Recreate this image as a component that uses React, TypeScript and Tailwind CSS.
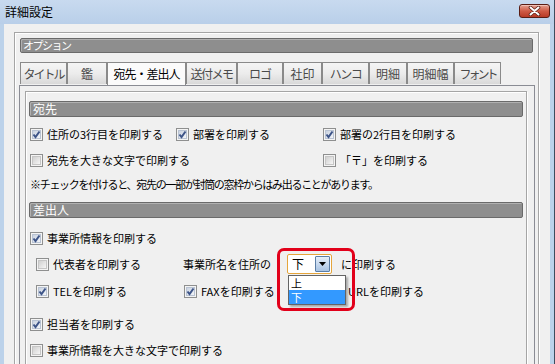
import React from 'react';

const JP = "font-['Noto_Sans_CJK_JP','Noto_Sans',sans-serif]";

const tabs = [
  { label: 'タイトル', w: 'w-[47px]', t: 'tracking-[-2px]' },
  { label: '鑑', w: 'w-[40px]', t: 'tracking-normal' },
  { label: '宛先・差出人', w: 'w-[79px]', t: 'tracking-[-1px]', active: true },
  { label: '送付メモ', w: 'w-[51px]', t: 'tracking-[-1.5px]' },
  { label: 'ロゴ', w: 'w-[46px]', t: 'tracking-[-1px]' },
  { label: '社印', w: 'w-[39px]', t: 'tracking-normal' },
  { label: 'ハンコ', w: 'w-[47px]', t: 'tracking-[-1.5px]' },
  { label: '明細', w: 'w-[38px]', t: 'tracking-normal' },
  { label: '明細幅', w: 'w-[47px]', t: 'tracking-normal' },
  { label: 'フォント', w: 'w-[47px]', t: 'tracking-[-3px]' },
];

const Check = ({ checked }: { checked?: boolean }) => (
  <span className="relative inline-block h-[13px] w-[13px] shrink-0 border border-[#8e8f8f] bg-[#f4f4f4]">
    <span
      className={
        checked
          ? 'absolute inset-[1px] border border-[#b9c3d3] bg-linear-to-br from-[#c9d2e0] to-[#f3f5f9]'
          : 'absolute inset-[1px] border border-[#c6c6c6] bg-linear-to-br from-[#d0d0d0] to-[#f6f6f6]'
      }
    />
    {checked && (
      <svg className="absolute left-0 top-0" width="11" height="11" viewBox="0 0 11 11">
        <polyline points="2.5,5.5 4.5,8 8.5,2.5" fill="none" stroke="#3d5488" strokeWidth="2" />
      </svg>
    )}
  </span>
);

const Item = ({ checked, label, w }: { checked?: boolean; label: string; w?: string }) => (
  <label className={`flex shrink-0 items-center gap-[4px] ${w ?? ''}`}>
    <Check checked={checked} />
    <span className="whitespace-nowrap text-[11px] leading-[13px] text-black">{label}</span>
  </label>
);

const SectionBar = ({ title }: { title: string }) => (
  <div className="flex h-[16px] items-center rounded-[2px] border border-[#6a6a6a] bg-[#8e8e8e] pl-[3px] shadow-[inset_1px_1px_0_#b0b0b0]">
    <span className="text-[12px] leading-[14px] text-white">{title}</span>
  </div>
);

const App = () => {
  return (
    <div className={`flex h-[364px] w-[555px] flex-col overflow-hidden border-r border-[#3e4c5e] bg-[#bcd2ea] ${JP}`}>
      {/* title bar */}
      <div className="flex h-[24px] shrink-0 items-start justify-between bg-linear-to-b from-[#c8daef] to-[#b9cfe9] pl-[5px] pr-[4px]">
        <span className="mt-[5px] text-[12px] leading-[14px] text-black">詳細設定</span>
        <div className="mt-[4px] flex h-[14px] w-[31px] items-center justify-center rounded-[3px] border border-[#5a1d14] bg-linear-to-b from-[#e3a193] via-[#cf5a45] to-[#b83a25] shadow-[inset_0_1px_0_#f0c0b5]">
          <svg width="13" height="10" viewBox="0 0 13 10">
            <path d="M2.5 1.5 L10.5 8.5 M10.5 1.5 L2.5 8.5" stroke="#5b2218" strokeWidth="3.6" strokeLinecap="round" />
            <path d="M2.5 1.5 L10.5 8.5 M10.5 1.5 L2.5 8.5" stroke="#ffffff" strokeWidth="2" strokeLinecap="round" />
          </svg>
        </div>
      </div>

      {/* window body */}
      <div className="ml-[4px] mr-[4px] flex-1 bg-[#f0f0f0] pl-[10px] pr-[11px] pt-[8px]">
        {/* outer group */}
        <div className="h-[400px] border border-[#a5a5a5] pl-[4px] pr-[3px] pt-[5px] shadow-[inset_1px_1px_0_#ffffff,1px_1px_0_#ffffff]">
          <div className="ml-[1px] mr-[2px] flex h-[15px] items-center rounded-[2px] border border-[#6a6a6a] bg-[#8e8e8e] pl-[2px] shadow-[inset_1px_1px_0_#b0b0b0]">
            <span className="text-[11px] leading-[13px] tracking-[-1.5px] text-white">オプション</span>
          </div>

          {/* tabs */}
          <div className="relative z-10 ml-[1px] mt-[9px] flex items-start">
            {tabs.map((t) => (
              <div
                key={t.label}
                className={`${t.w} flex shrink-0 items-center justify-center border-x border-t border-[#8a8a8a] ${
                  t.active
                    ? 'h-[23px] bg-[#fbfbfb] text-black'
                    : 'h-[22px] bg-linear-to-b from-[#f5f5f5] via-[#ececec] to-[#d9d9d9] text-[#4a4a4a]'
                }`}
              >
                <span className={`whitespace-nowrap text-[12px] leading-[14px] ${t.t}`}>{t.label}</span>
              </div>
            ))}
          </div>

          {/* tab panel */}
          <div className="h-[400px] border border-[#8a8c94] pl-[5px] pr-[7px] pt-[5px]">
            {/* inner group */}
            <div className="h-[400px] border border-[#a5a5a5] pl-[3px] pr-[3px] pt-[9px] shadow-[inset_1px_1px_0_#ffffff,1px_1px_0_#ffffff]">
              <SectionBar title="宛先" />

              <div className="mt-[4px] flex h-[26px] items-center pl-[1px]">
                <Item checked label="住所の3行目を印刷する" w="w-[146px]" />
                <Item checked label="部署を印刷する" w="w-[147px]" />
                <Item checked label="部署の2行目を印刷する" />
              </div>
              <div className="flex h-[26px] items-center pl-[1px]">
                <Item label="宛先を大きな文字で印刷する" w="w-[293px]" />
                <Item label="「〒」を印刷する" />
              </div>
              <div className="flex h-[22px] items-center pl-[1px]">
                <span className="whitespace-nowrap text-[11px] leading-[13px] tracking-[-1.3px] text-black">
                  ※チェックを付けると、宛先の一部が封筒の窓枠からはみ出ることがあります。
                </span>
              </div>

              <div className="mt-[7px]">
                <SectionBar title="差出人" />
              </div>

              <div className="mt-[7px] flex h-[26px] items-center pl-[1px]">
                <Item checked label="事業所情報を印刷する" />
              </div>

              <div className="flex h-[26px] items-center pl-[7px]">
                <Item label="代表者を印刷する" w="w-[147px]" />
                <span className="w-[104px] shrink-0 whitespace-nowrap text-[11px] leading-[13px] text-black">事業所名を住所の</span>

                {/* combo box with open list */}
                <div className="relative z-10 h-[20px] w-[45px] shrink-0">
                  <div className="flex h-full w-full rounded-[2px] border border-[#e5a53c] bg-white p-[1px]">
                    <div className="flex flex-1 items-center pl-[3px]">
                      <span className="text-[12px] leading-[14px] text-black">下</span>
                    </div>
                    <div className="flex w-[15px] items-center justify-center rounded-[1px] border border-[#5b7ea6] bg-linear-to-b from-[#e6effa] to-[#a9c3e2]">
                      <svg width="7" height="4" viewBox="0 0 7 4">
                        <path d="M0 0 H7 L3.5 4 Z" fill="#000" />
                      </svg>
                    </div>
                  </div>

                  <div className="absolute left-[1px] top-[21px] w-[58px] border border-[#646464] bg-white shadow-[2px_2px_2px_rgba(0,0,0,0.3)]">
                    <div className="flex h-[14px] items-center pl-[2px]">
                      <span className="text-[11px] leading-[12px] text-black">上</span>
                    </div>
                    <div className="flex h-[14px] items-center bg-[#3399ff] pl-[2px]">
                      <span className="text-[11px] leading-[12px] text-white">下</span>
                    </div>
                  </div>

                  <div className="pointer-events-none absolute left-[-10px] top-[-6px] h-[63px] w-[78px] rounded-[7px] border-[3px] border-[#e2001a]" />
                </div>

                <span className="ml-[9px] whitespace-nowrap text-[11px] leading-[13px] text-black">に印刷する</span>
              </div>

              <div className="mt-[1px] flex h-[26px] items-center pl-[7px]">
                <Item checked label="TELを印刷する" w="w-[148px]" />
                <Item checked label="FAXを印刷する" w="w-[147px]" />
                <Item checked label="URLを印刷する" />
              </div>

              <div className="mt-[7px] flex h-[26px] items-center pl-[1px]">
                <Item checked label="担当者を印刷する" />
              </div>
              <div className="flex h-[26px] items-center pl-[1px]">
                <Item label="事業所情報を大きな文字で印刷する" />
              </div>
            </div>
          </div>
        </div>
      </div>
    </div>
  );
};

export default App;
